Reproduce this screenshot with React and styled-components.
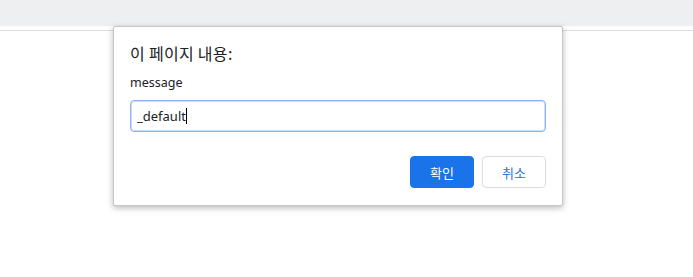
import React from "react";
import styled, { createGlobalStyle } from "styled-components";

const Global = createGlobalStyle`
  html, body { margin: 0; padding: 0; background: #ffffff; }
  body { font-family: "Noto Sans", "Noto Sans CJK KR", sans-serif; }
  * { box-sizing: border-box; }
`;

const Page = styled.div`
  position: relative;
  width: 693px;
  height: 277px;
  overflow: hidden;
  background: #fff;
`;

const TopBar = styled.div`
  height: 26px;
  background: #eeeff1;
`;

const Divider = styled.div`
  margin-top: 4px;
  height: 1px;
  background: #dadce0;
`;

const Dialog = styled.div`
  position: absolute;
  left: 113px;
  top: 26px;
  width: 450px;
  height: 180px;
  background: #fff;
  border: 1px solid #c6c6c6;
  border-radius: 2px;
  box-shadow: 0 2px 6px rgba(0, 0, 0, 0.28);
  padding: 16px 16px 15px;
  display: flex;
  flex-direction: column;
`;

const Title = styled.div`
  font-family: "Noto Sans CJK KR", sans-serif;
  font-size: 16px;
  line-height: 20px;
  color: #202124;
  letter-spacing: 0.3px;
`;

const Message = styled.div`
  margin-top: 11px;
  font-family: "Noto Sans", "Noto Sans CJK KR", sans-serif;
  font-size: 12.5px;
  line-height: 18px;
  color: #202124;
`;

const Field = styled.div`
  margin-top: 8px;
  height: 32px;
  border: 1px solid #8ab4f8;
  box-shadow: inset 0 0 0 1px rgba(138, 180, 248, 0.45);
  border-radius: 4px;
  padding: 0 6px;
  display: flex;
  align-items: center;
  font-family: "Noto Sans", sans-serif;
  font-size: 13px;
  color: #202124;
`;

const Caret = styled.span`
  display: inline-block;
  width: 1px;
  height: 16px;
  background: #000;
  margin-left: 0px;
`;

const Actions = styled.div`
  margin-top: 24px;
  display: flex;
  justify-content: flex-end;
  gap: 8px;
`;

const Button = styled.button`
  width: 64px;
  height: 32px;
  border-radius: 4px;
  font-family: "Noto Sans CJK KR", sans-serif;
  font-size: 13px;
  cursor: pointer;
  padding: 0;
  border: 1px solid ${(p) => (p.$primary ? "#1a73e8" : "#dadce0")};
  background: ${(p) => (p.$primary ? "#1a73e8" : "#ffffff")};
  color: ${(p) => (p.$primary ? "#ffffff" : "#1a73e8")};
`;

export default function App() {
  return (
    <Page>
      <Global />
      <TopBar />
      <Divider />
      <Dialog>
        <Title>이 페이지 내용:</Title>
        <Message>message</Message>
        <Field>
          _default<Caret />
        </Field>
        <Actions>
          <Button $primary>확인</Button>
          <Button>취소</Button>
        </Actions>
      </Dialog>
    </Page>
  );
}
